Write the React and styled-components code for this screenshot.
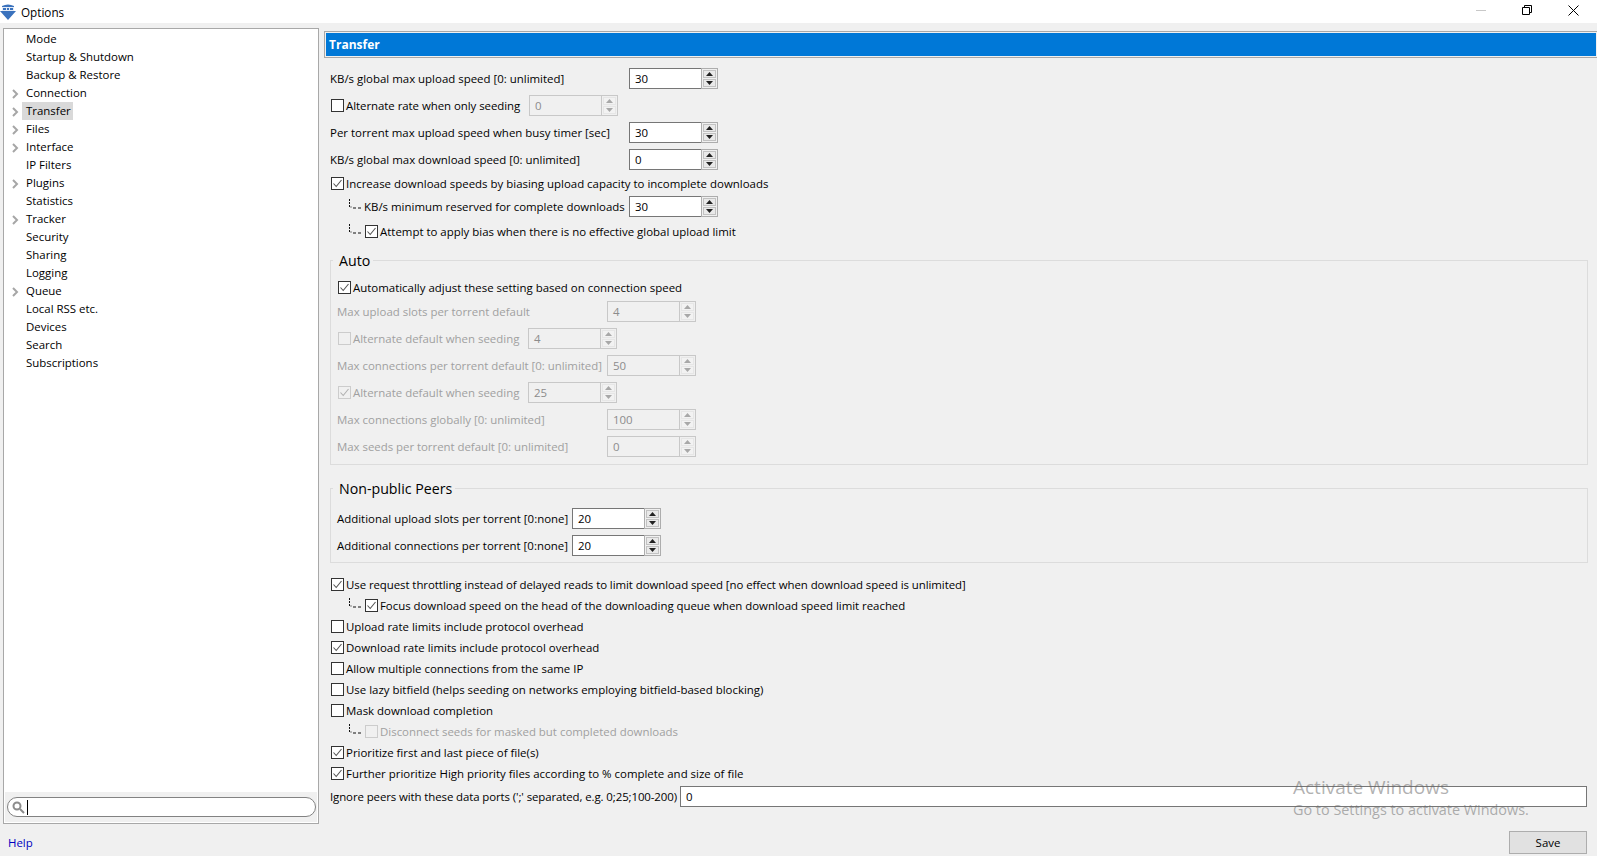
import React from "react";
import styled, { createGlobalStyle } from "styled-components";

const Global = createGlobalStyle`
  html, body { margin: 0; padding: 0; background: #f0f0f0; height: 100%; overflow: hidden; }
  * { box-sizing: border-box; }
  body { font-family: "Open Sans", "Noto Sans", sans-serif; font-size: 11.45px; color: #000; }
`;
const Window = styled.div`
  width: 1597px; height: 856px; display: flex; flex-direction: column; background: #f0f0f0; position: relative; overflow: hidden;
`;
const TitleBar = styled.div`
  height: 23px; background: #fff; display: flex; align-items: center; flex: none;
`;
const TitleText = styled.span`margin-left: 5px; font-size: 11.7px;`;
const WinButtons = styled.div`margin-left: auto; margin-right: 1px; padding-bottom: 3px; display: flex; align-items: center;`;
const WinButton = styled.div`
  width: 46px; height: 20px; display: flex; align-items: center; justify-content: center;
`;
const Body = styled.div`
  flex: 1; display: flex; padding: 5px 4px 0 3px; gap: 5px; min-height: 0;
`;
const Side = styled.div`
  width: 316px; height: 796px; border: 1px solid #a8a8a8; background: #fff; display: flex; flex-direction: column; flex: none; padding: 1px;
`;
const Tree = styled.div`flex: 1;`;
const TreeRow = styled.div`
  height: 18px; display: flex; align-items: center; position: relative; padding-left: 17px;
`;
const Chevron = styled.svg`position: absolute; left: 7px; top: 5px;`;
const TreeLabel = styled.span`
  padding: 0 ${p => (p.$selected ? 2 : 4)}px 0 4px; height: 18px; line-height: 17px; background: ${p => (p.$selected ? "#d9d9d9" : "transparent")};
`;
const SearchBar = styled.div`
  height: 30px; background: #f0f0f0; padding: 5px 2px; flex: none;
`;
const SearchBox = styled.div`
  height: 20px; width: 309px; background: #fff; border: 1px solid #828282; border-radius: 10px; display: flex; align-items: center; padding-left: 4px;
`;
const Caret = styled.div`width: 1px; height: 15px; background: #000; margin-left: 2px;`;
const Main = styled.div`flex: 1; min-width: 0; display: flex; flex-direction: column;`;
const Header = styled.div`
  height: 27px; margin-top: 3px; border: 1px solid #a8a8a8; padding: 1px; background: #f0f0f0; width: 1274px;
`;
const HeaderFill = styled.div`
  height: 100%; background: #0078d7; color: #fff; font-weight: 700; font-size: 12px; line-height: 23px; padding-left: 3px;
`;
const Content = styled.div`padding-left: 6px; width: 1268px;`;
const Row = styled.div`
  display: flex; align-items: center; height: 20px; margin-top: ${p => p.$mt ?? 0}px; padding-left: ${p => p.$indent ?? 0}px; white-space: nowrap;
  color: ${p => (p.$off ? "#a0a0a0" : "#000")};
`;
const Label = styled.span`
  width: ${p => (p.$w ? p.$w + "px" : "auto")}; flex: none; letter-spacing: ${p => p.$ls ?? 0}px;
`;
const Check = styled.span`
  width: 13px; height: 13px; flex: none; margin: 0 2px 0 1px; border: 1px solid ${p => (p.$off ? "#cccccc" : "#333")};
  background: ${p => (p.$off ? "#f0f0f0" : "#fff")}; display: inline-flex; align-items: center; justify-content: center;
`;
const Spin = styled.div`
  width: ${p => p.$w ?? 89}px; height: 21px; flex: none; display: flex; color: ${p => (p.$off ? "#8c8c8c" : "#000")};
`;
const SpinValue = styled.span`
  flex: 1; padding-left: 5px; line-height: 19px; border: 1px solid ${p => (p.$off ? "#c8c8c8" : "#767676")}; border-right: 0;
  background: ${p => (p.$off ? "#f0f0f0" : "#fff")};
`;
const SpinButtons = styled.div`
  width: 17px; display: flex; flex-direction: column; gap: 1px; padding: 1px; border: 1px solid ${p => (p.$off ? "#c8c8c8" : "#adadad")};
  background: #f0f0f0;
`;
const SpinBtn = styled.div`
  flex: 1; background: ${p => (p.$off ? "#f2f2f2" : "#e9e9e9")}; border: 1px solid ${p => (p.$off ? "#e6e6e6" : "#c2c2c2")}; display: flex; align-items: center; justify-content: center;
`;
const Group = styled.div`
  margin-top: ${p => p.$mt}px; padding: 0 0 0 6px; height: ${p => p.$h}px; border: 1px solid #dcdcdc; width: 1258px; position: relative;
  &::before { content: ""; display: table; }
`;
const Legend = styled.div`
  position: absolute; top: -10px; left: 2px; padding: 0 3px 0 6px; background: #f0f0f0; font-size: 14.2px; line-height: 20px;
`;
const Ports = styled.div`
  width: 907px; height: 21px; margin-left: 4px; border: 1px solid #767676; background: #fff; padding-left: 5px; line-height: 19px; flex: none;
`;
const Footer = styled.div`
  height: 32px; flex: none; display: flex; align-items: flex-start; padding: 7px 10px 0 8px; justify-content: space-between;
`;
const Help = styled.a`color: #0000c0; line-height: 26px; margin-top: -1px;`;
const Save = styled.div`
  width: 78px; height: 23px; background: #e1e1e1; border: 1px solid #adadad; text-align: center; line-height: 21px;
`;
const Watermark = styled.div`
  position: absolute; left: 1293px; top: 776px; color: rgba(100,100,100,.5); pointer-events: none;
`;
const WmTitle = styled.div`font-size: 19px; line-height: 23px;`;
const WmSub = styled.div`font-size: 14.4px; line-height: 20px; margin-top: 1px;`;
const ConnectorIcon = styled.svg`flex: none; margin-bottom: 4px;`;

const Tick = ({ off }) => (
  <svg width="11" height="11" viewBox="0 0 11 11">
    <path d="M1.5 5.5 L4.2 8.5 L9.5 2" fill="none" stroke={off ? "#b0b0b0" : "#555"} strokeWidth="1.1" />
  </svg>
);
const Box = ({ on, off }) => <Check $off={off}>{on && <Tick off={off} />}</Check>;
const Arrow = ({ down, off }) => (
  <svg width="7" height="4" viewBox="0 0 7 4">
    <path d={down ? "M0 0H7L3.5 4Z" : "M0 4H7L3.5 0Z"} fill={off ? "#a8a8a8" : "#222"} />
  </svg>
);
const Spinner = ({ value, off, w }) => (
  <Spin $off={off} $w={w}>
    <SpinValue $off={off}>{value}</SpinValue>
    <SpinButtons $off={off}>
      <SpinBtn $off={off}><Arrow off={off} /></SpinBtn>
      <SpinBtn $off={off}><Arrow down off={off} /></SpinBtn>
    </SpinButtons>
  </Spin>
);
const Connector = () => (
  <ConnectorIcon width="16" height="10" viewBox="0 0 16 10">
    <path d="M1.5 0V2M1.5 3V5M1.5 6V8M2.5 8H3.5M5 9H8M10 9H13" fill="none" stroke="#111" strokeWidth="1" />
  </ConnectorIcon>
);
const Logo = () => (
  <svg width="16" height="18" viewBox="0 0 16 18" style={{ flex: "none" }}>
    <path d="M2 3 Q8 0 14 3 V8 H16 L8 17 L0 8 H2Z" fill="#3a72bd" />
    <path d="M2 4H14V8H2Z" fill="#e4ecf7" />
    <path d="M3 5H6V7H3ZM7 5H9V7H7ZM10 5H13V7H10Z" fill="#3a72bd" />
  </svg>
);

const tree = [
  ["Mode"], ["Startup & Shutdown"], ["Backup & Restore"], ["Connection", 1], ["Transfer", 1, 1], ["Files", 1],
  ["Interface", 1], ["IP Filters"], ["Plugins", 1], ["Statistics"], ["Tracker", 1], ["Security"], ["Sharing"],
  ["Logging"], ["Queue", 1], ["Local RSS etc."], ["Devices"], ["Search"], ["Subscriptions"],
];

export default function App() {
  return (
    <Window>
      <Global />
      <TitleBar>
        <Logo />
        <TitleText>Options</TitleText>
        <WinButtons>
          <WinButton>
            <svg width="10" height="10"><path d="M0 5.5H10" stroke="#c8c8c8" /></svg>
          </WinButton>
          <WinButton>
            <svg width="10" height="10"><path d="M2.5 2.5V.5H9.5V7.5H7.5M.5 2.5H7.5V9.5H.5Z" fill="none" stroke="#000" /></svg>
          </WinButton>
          <WinButton>
            <svg width="11" height="11"><path d="M.5 .5L10.5 10.5M10.5 .5L.5 10.5" stroke="#000" /></svg>
          </WinButton>
        </WinButtons>
      </TitleBar>
      <Body>
        <Side>
          <Tree>
            {tree.map(([name, arrow, sel]) => (
              <TreeRow key={name}>
                {arrow && (
                  <Chevron width="7" height="10" viewBox="0 0 7 10">
                    <path d="M1 1L5 5L1 9" fill="none" stroke="#a6a6a6" strokeWidth="2" />
                  </Chevron>
                )}
                <TreeLabel $selected={sel}>{name}</TreeLabel>
              </TreeRow>
            ))}
          </Tree>
          <SearchBar>
            <SearchBox>
              <svg width="13" height="13" viewBox="0 0 13 13">
                <circle cx="5" cy="5" r="3.5" fill="none" stroke="#8c8c8c" strokeWidth="2" />
                <path d="M8 8L12 12" stroke="#8c8c8c" strokeWidth="2" />
              </svg>
              <Caret />
            </SearchBox>
          </SearchBar>
        </Side>
        <Main>
          <Header><HeaderFill>Transfer</HeaderFill></Header>
          <Content>
            <Row $mt={10}><Label $w={299}>KB/s global max upload speed [0: unlimited]</Label><Spinner value="30" /></Row>
            <Row $mt={7}><Box /><Label $w={183} $ls={-0.05}>Alternate rate when only seeding</Label><Spinner value="0" off /></Row>
            <Row $mt={7}><Label $w={299}>Per torrent max upload speed when busy timer [sec]</Label><Spinner value="30" /></Row>
            <Row $mt={7}><Label $w={299}>KB/s global max download speed [0: unlimited]</Label><Spinner value="0" /></Row>
            <Row $mt={4}><Box on /><Label>Increase download speeds by biasing upload capacity to incomplete downloads</Label></Row>
            <Row $mt={3} $indent={18}><Connector /><Label $w={265}>KB/s minimum reserved for complete downloads</Label><Spinner value="30" /></Row>
            <Row $mt={5} $indent={18}><Connector /><Box on /><Label>Attempt to apply bias when there is no effective global upload limit</Label></Row>
            <Group $mt={19} $h={205}>
              <Legend>Auto</Legend>
              <Row $mt={16}><Box on /><Label>Automatically adjust these setting based on connection speed</Label></Row>
              <Row $mt={4} $off><Label $w={270}>Max upload slots per torrent default</Label><Spinner value="4" off /></Row>
              <Row $mt={7} $off><Box off /><Label $w={175}>Alternate default when seeding</Label><Spinner value="4" off /></Row>
              <Row $mt={7} $off><Label $w={270} $ls={-0.03}>Max connections per torrent default [0: unlimited]</Label><Spinner value="50" off /></Row>
              <Row $mt={7} $off><Box on off /><Label $w={175}>Alternate default when seeding</Label><Spinner value="25" off /></Row>
              <Row $mt={7} $off><Label $w={270}>Max connections globally [0: unlimited]</Label><Spinner value="100" off /></Row>
              <Row $mt={7} $off><Label $w={270} $ls={-0.03}>Max seeds per torrent default [0: unlimited]</Label><Spinner value="0" off /></Row>
            </Group>
            <Group $mt={23} $h={75}>
              <Legend>Non-public Peers</Legend>
              <Row $mt={19}><Label $w={235}>Additional upload slots per torrent [0:none]</Label><Spinner value="20" /></Row>
              <Row $mt={7}><Label $w={235}>Additional connections per torrent [0:none]</Label><Spinner value="20" /></Row>
            </Group>
            <Row $mt={11}><Box on /><Label $ls={-0.07}>Use request throttling instead of delayed reads to limit download speed [no effect when download speed is unlimited]</Label></Row>
            <Row $mt={1} $indent={18}><Connector /><Box on /><Label $ls={-0.03}>Focus download speed on the head of the downloading queue when download speed limit reached</Label></Row>
            <Row $mt={1}><Box /><Label>Upload rate limits include protocol overhead</Label></Row>
            <Row $mt={1}><Box on /><Label>Download rate limits include protocol overhead</Label></Row>
            <Row $mt={1}><Box /><Label>Allow multiple connections from the same IP</Label></Row>
            <Row $mt={1}><Box /><Label>Use lazy bitfield (helps seeding on networks employing bitfield-based blocking)</Label></Row>
            <Row $mt={1}><Box /><Label>Mask download completion</Label></Row>
            <Row $mt={1} $indent={18} $off><Connector /><Box off /><Label>Disconnect seeds for masked but completed downloads</Label></Row>
            <Row $mt={1}><Box on /><Label>Prioritize first and last piece of file(s)</Label></Row>
            <Row $mt={1}><Box on /><Label>Further prioritize High priority files according to % complete and size of file</Label></Row>
            <Row $mt={3}><Label $w={346} $ls={-0.1}>Ignore peers with these data ports (';' separated, e.g. 0;25;100-200)</Label><Ports>0</Ports></Row>
          </Content>
        </Main>
      </Body>
      <Footer>
        <Help>Help</Help>
        <Save>Save</Save>
      </Footer>
      <Watermark>
        <WmTitle>Activate Windows</WmTitle>
        <WmSub>Go to Settings to activate Windows.</WmSub>
      </Watermark>
    </Window>
  );
}
